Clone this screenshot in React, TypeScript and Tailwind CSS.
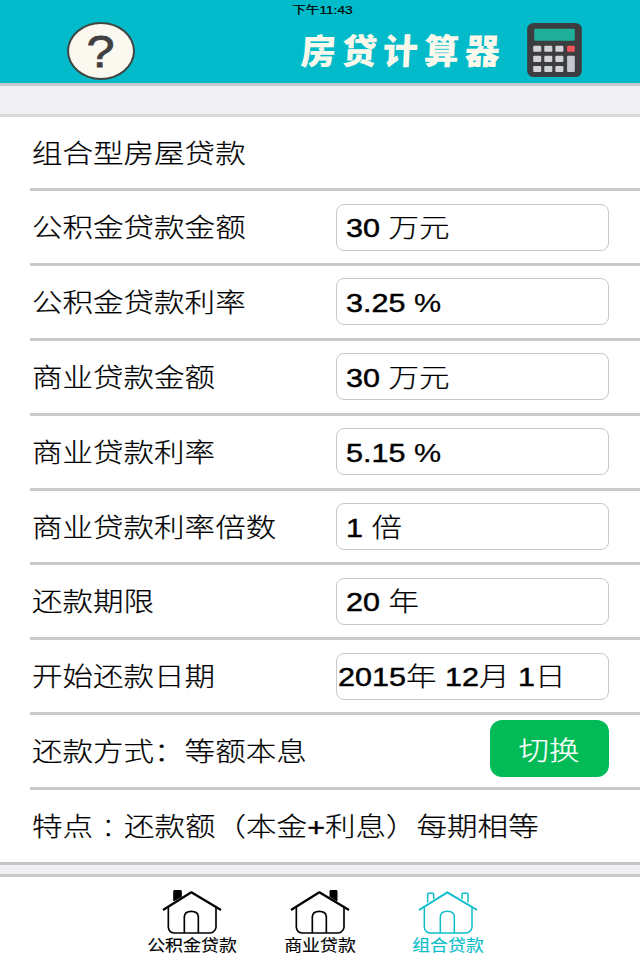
import { Fragment, useState } from 'react'
import type { ReactNode } from 'react'

type ChimneySide = 'left' | 'right' | 'both'

interface Field {
  label: string
  value: string
  flush?: boolean
}

const FIELDS: Field[] = [
  { label: '公积金贷款金额', value: '30 万元' },
  { label: '公积金贷款利率', value: '3.25 %' },
  { label: '商业贷款金额', value: '30 万元' },
  { label: '商业贷款利率', value: '5.15 %' },
  { label: '商业贷款利率倍数', value: '1 倍' },
  { label: '还款期限', value: '20 年' },
  { label: '开始还款日期', value: '2015年 12月 1日', flush: true },
]

const TABS: { id: string; label: string; chimney: ChimneySide }[] = [
  { id: 'fund', label: '公积金贷款', chimney: 'left' },
  { id: 'business', label: '商业贷款', chimney: 'right' },
  { id: 'combined', label: '组合贷款', chimney: 'both' },
]

// Wide lettering; digits are set a little heavier than the Chinese text
function WideText({ children }: { children: string }) {
  const parts = children.split(/([0-9.+]+)/)
  return (
    <span className="mt-[2px] inline-block origin-left scale-x-[1.174] whitespace-pre text-[26px] leading-[36px] font-light [-webkit-text-stroke:0.2px_currentColor]">
      {parts.map((part, i) =>
        i % 2 ? (
          <span key={i} className="[-webkit-text-stroke:0.45px_currentColor]">{part}</span>
        ) : (
          <Fragment key={i}>{part}</Fragment>
        )
      )}
    </span>
  )
}

function Row({ children, first, last }: { children: ReactNode; first?: boolean; last?: boolean }) {
  return (
    <div className={`${first ? 'h-[74.2px]' : 'h-[74.87px]'} ${last ? '' : 'pl-[30px]'}`}>
      <div
        className={`flex h-full items-center border-b-[3px] pr-[31px] ${
          last ? 'border-[#c4c4c9] pl-[32px]' : 'border-[#c9c9c9] pl-[2px]'
        }`}
      >
        {children}
      </div>
    </div>
  )
}

function HouseIcon({ chimney, active }: { chimney: ChimneySide; active: boolean }) {
  return (
    <svg
      viewBox="0 0 180 132"
      className="h-[44px] w-[60px]"
      fill="none"
      stroke="currentColor"
      strokeWidth={active ? 4.5 : 5}
      strokeLinejoin="round"
    >
      {chimney === 'left' && <path d="M36 31V5q0-3 4-3h14q3 0 3 3v14z" fill="currentColor" />}
      {chimney === 'right' && <path d="M121 19V5q0-3 4-3h12q3 0 3 3v26z" fill="currentColor" />}
      {chimney === 'both' && (
        <>
          <path d="M29 37V13q0-3 3-3h12q3 0 3 3v14" />
          <path d="M132 27V13q0-3 3-3h12q3 0 3 3v24" />
        </>
      )}
      <path d="M3 60 88 7l89 53" strokeWidth={active ? 6 : 7} />
      <path d="M19 52v60q2 15 17 17h108q15-2 18-17V52" />
      <path d="M67 129V80q1-16 21-16t21 16v49" />
    </svg>
  )
}

function CalculatorIcon() {
  return (
    <svg viewBox="0 0 163 161" className="-mt-[2px] h-[54px] w-[55px]">
      <rect width="163" height="161" rx="19" fill="#3c3d3f" />
      <rect x="21" y="17" width="121" height="36" rx="4" fill="#20af99" />
      {[68, 98, 128].map(y =>
        [18, 51, 84].map(x => (
          <rect key={`${x}-${y}`} x={x} y={y} width="24" height="18" rx="3" fill="#d2d3d6" />
        ))
      )}
      <rect x="119" y="68" width="23" height="18" rx="3" fill="#f0545b" />
      <rect x="119" y="98" width="23" height="48" rx="3" fill="#c6c9d2" />
    </svg>
  )
}

export default function App() {
  const [activeTab, setActiveTab] = useState('combined')

  return (
    <div className="flex h-[960px] w-[640px] flex-col overflow-hidden bg-white font-['Liberation_Sans','Noto_Sans_CJK_SC',sans-serif] text-black">
      <header className="h-[86px] shrink-0 border-b-[3px] border-[#c5c9c8] bg-[#02bbca]">
        <div className="flex h-[18px] justify-center pl-[4px]">
          <span className="inline-block scale-x-[1.24] text-[11px] leading-[20px] [-webkit-text-stroke:0.2px_black]">
            下午11:43
          </span>
        </div>
        <div className="flex h-[65px] items-center pl-[67px]">
          <button className="flex h-[58px] w-[68px] items-center justify-center rounded-[50%] border-2 border-[#3f4542] bg-[#faf8ef]">
            <span className="mt-[3px] inline-block scale-x-[1.12] text-[45px] leading-[54px] text-[#404040] [-webkit-text-stroke:0.8px_#404040]">
              ?
            </span>
          </button>
          <h1 className="mt-[2px] ml-[166px] w-[226px] -skew-x-3 text-[35px] leading-[48px] font-black tracking-[6px] whitespace-nowrap text-[#fcf9ec]">
            房贷计算器
          </h1>
          <CalculatorIcon />
        </div>
      </header>

      <div className="h-[31px] shrink-0 border-b-[3px] border-[#d8d8db] bg-[#efeff4]" />

      <main>
        <Row first>
          <WideText>组合型房屋贷款</WideText>
        </Row>
        {FIELDS.map(field => (
          <Row key={field.label}>
            <div className="w-[304px] shrink-0">
              <WideText>{field.label}</WideText>
            </div>
            <div
              className={`flex h-[47px] w-[273px] shrink-0 items-center rounded-[8px] border-[1.5px] border-[#c8c8c8] ${
                field.flush ? 'pl-[1px]' : 'pl-[9px]'
              }`}
            >
              <WideText>{field.value}</WideText>
            </div>
          </Row>
        ))}
        <Row>
          <div className="flex-1">
            <WideText>还款方式：等额本息</WideText>
          </div>
          <button className="-mt-[5px] flex h-[57px] w-[119px] items-center justify-center rounded-[12px] bg-[#02bb56] pt-[6px] text-white">
            <span className="inline-block scale-x-[1.17] text-[26px] font-light [-webkit-text-stroke:0.2px_white]">切换</span>
          </button>
        </Row>
        <Row last>
          <div className="flex">
            <WideText>特点</WideText>
            <span className="mt-[2px] ml-[9px] w-[30.5px] text-center font-['Noto_Sans_CJK_TC',sans-serif] text-[26px] leading-[36px] font-light" lang="zh-TW">：</span>
            <WideText>还款额（本金+利息）每期相等</WideText>
          </div>
        </Row>
      </main>

      <div className="h-[12px] shrink-0 border-b-[3px] border-[#c9c9c9] bg-[#efeff4]" />

      <nav className="flex flex-1 justify-center">
        {TABS.map(tab => (
          <button
            key={tab.id}
            onClick={() => setActiveTab(tab.id)}
            className={`flex w-[128px] flex-col items-center pt-[13px] ${
              activeTab === tab.id ? 'text-[#0ebdca]' : 'text-black'
            }`}
          >
            <HouseIcon chimney={tab.chimney} active={activeTab === tab.id} />
            <span className="inline-block scale-x-[1.12] text-[16px] leading-[23px] whitespace-nowrap [-webkit-text-stroke:0.15px_currentColor]">
              {tab.label}
            </span>
          </button>
        ))}
      </nav>
    </div>
  )
}
